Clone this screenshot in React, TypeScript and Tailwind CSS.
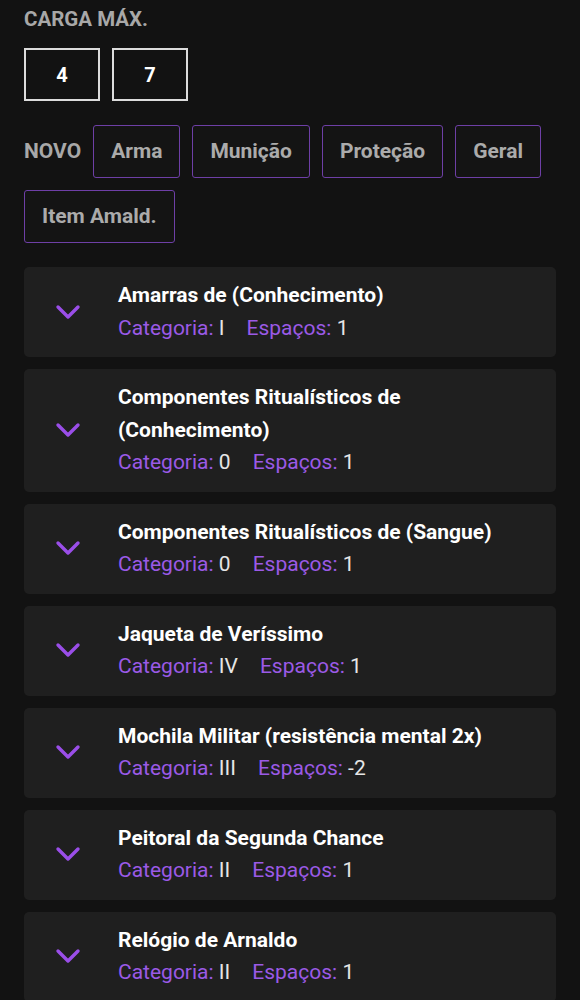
import React from 'react';

interface Item {
  name: string;
  categoria: string;
  espacos: string;
}

const ITEMS: Item[] = [
  { name: 'Amarras de (Conhecimento)', categoria: 'I', espacos: '1' },
  { name: 'Componentes Ritualísticos de (Conhecimento)', categoria: '0', espacos: '1' },
  { name: 'Componentes Ritualísticos de (Sangue)', categoria: '0', espacos: '1' },
  { name: 'Jaqueta de Veríssimo', categoria: 'IV', espacos: '1' },
  { name: 'Mochila Militar (resistência mental 2x)', categoria: 'III', espacos: '-2' },
  { name: 'Peitoral da Segunda Chance', categoria: 'II', espacos: '1' },
  { name: 'Relógio de Arnaldo', categoria: 'II', espacos: '1' },
];

const NEW_TYPES = ['Arma', 'Munição', 'Proteção', 'Geral', 'Item Amald.'];

const Chevron = () => (
  <svg width="26" height="16" viewBox="0 0 26 16" fill="none">
    <path d="M3 3l10 10 10-10" stroke="#9a4ee8" strokeWidth="3.4" strokeLinecap="round" strokeLinejoin="round" />
  </svg>
);

export default function App() {
  return (
    <div
      className="min-h-[1000px] bg-[#121212] px-6 pb-4 text-white"
      style={{ fontFamily: 'Roboto, "Noto Sans", sans-serif' }}
    >
      {/* Carga máxima */}
      <div className="pt-[6px] text-[20.5px] font-bold leading-[26px] text-[#a8a8a8]">CARGA MÁX.</div>
      <div className="mt-[16px] flex gap-3">
        {['4', '7'].map((v) => (
          <div
            key={v}
            className="flex h-[53px] w-[76px] items-center justify-center border-2 border-[#dcdcdc] text-[20px] font-bold"
          >
            {v}
          </div>
        ))}
      </div>

      {/* Novo */}
      <div className="mt-6 flex flex-wrap items-center gap-3">
        <span className="text-[21px] font-bold text-[#a8a8a8]">NOVO</span>
        {NEW_TYPES.map((t) => (
          <button
            key={t}
            type="button"
            className="h-[53px] rounded-[3px] border-[1.5px] border-[#6e3fa6] bg-[#141414] px-[17px] text-[21px] font-bold text-[#ababab]"
          >
            {t}
          </button>
        ))}
      </div>

      {/* Items */}
      <div className="mt-6 flex flex-col gap-3">
        {ITEMS.map((item) => (
          <div key={item.name} className="flex items-center rounded-[5px] bg-[#1f1f1f] pb-[13px] pl-[31px] pr-4 pt-[12px]">
            <div className="flex w-[26px] shrink-0 justify-center">
              <Chevron />
            </div>
            <div className="ml-[37px] min-w-0 flex-1">
              <div className="text-[21px] font-bold leading-[32.5px] text-white">{item.name}</div>
              <div className="flex gap-[22px] text-[21px] leading-[32.5px]">
                <span>
                  <span className="text-[#9b5ae6]">Categoria:</span>{' '}
                  <span className="text-[#e6e6e6]">{item.categoria}</span>
                </span>
                <span>
                  <span className="text-[#9b5ae6]">Espaços:</span>{' '}
                  <span className="text-[#e6e6e6]">{item.espacos}</span>
                </span>
              </div>
            </div>
          </div>
        ))}
      </div>
    </div>
  );
}
